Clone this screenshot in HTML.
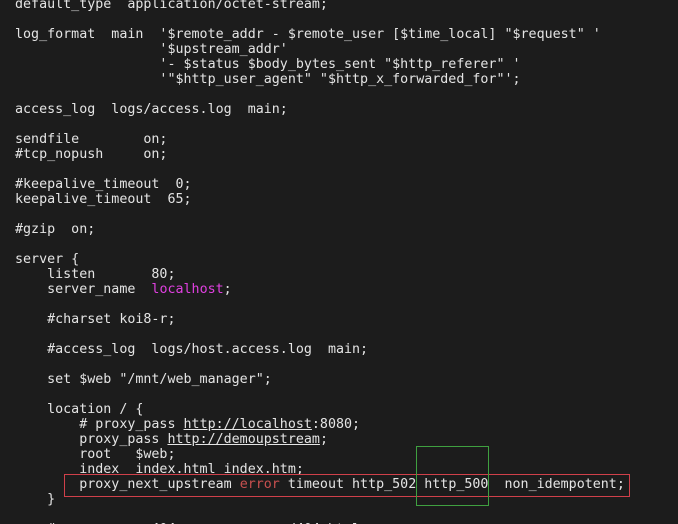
<!DOCTYPE html>
<html><head><meta charset="utf-8"><style>
html,body{margin:0;padding:0;background:#1c1c1c;width:678px;height:524px;overflow:hidden;position:relative}
pre{margin:0;position:absolute;left:15px;top:-3px;font-family:"DejaVu Sans Mono","Liberation Mono",monospace;font-size:13.33px;line-height:15px;color:#e4e4e4;white-space:pre}
.m{color:#e040e0}.r{color:#c8504f}.u{text-decoration:underline}
.box{position:absolute;box-sizing:border-box}
</style></head><body>
<pre>default_type  application/octet-stream;

log_format  main  '$remote_addr - $remote_user [$time_local] "$request" '
                  '$upstream_addr'
                  '- $status $body_bytes_sent "$http_referer" '
                  '"$http_user_agent" "$http_x_forwarded_for"';

access_log  logs/access.log  main;

sendfile        on;
#tcp_nopush     on;

#keepalive_timeout  0;
keepalive_timeout  65;

#gzip  on;

server {
    listen       80;
    server_name  <span class="m">localhost</span>;

    #charset koi8-r;

    #access_log  logs/host.access.log  main;

    set $web "/mnt/web_manager";

    location / {
        # proxy_pass <span class="u">http://localhost</span>:8080;
        proxy_pass <span class="u">http://demoupstream</span>;
        root   $web;
        index  index.html index.htm;
        proxy_next_upstream <span class="r">error</span> timeout http_502 http_500  non_idempotent;
    }

    #error_page  404              /404.html;</pre>
<div class="box" style="left:64px;top:474px;width:566px;height:23px;border:1px solid #d0404a"></div>
<div class="box" style="left:416px;top:446px;width:73px;height:60px;border:1px solid #3fa040"></div>
</body></html>
